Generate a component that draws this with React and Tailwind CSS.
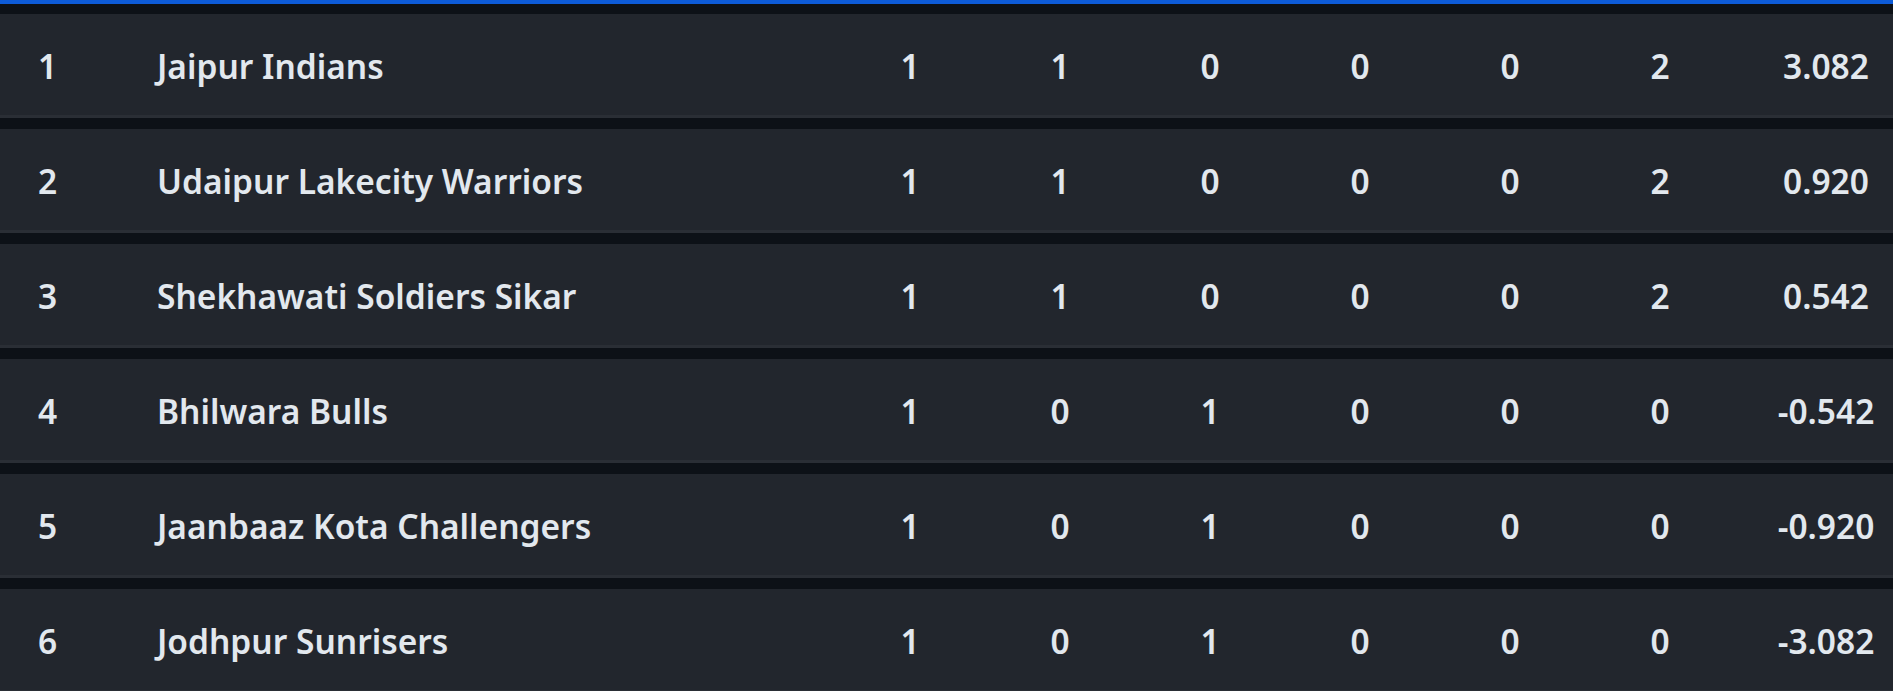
const rows = [
  ["1", "Jaipur Indians", "1", "1", "0", "0", "0", "2", "3.082"],
  ["2", "Udaipur Lakecity Warriors", "1", "1", "0", "0", "0", "2", "0.920"],
  ["3", "Shekhawati Soldiers Sikar", "1", "1", "0", "0", "0", "2", "0.542"],
  ["4", "Bhilwara Bulls", "1", "0", "1", "0", "0", "0", "-0.542"],
  ["5", "Jaanbaaz Kota Challengers", "1", "0", "1", "0", "0", "0", "-0.920"],
  ["6", "Jodhpur Sunrisers", "1", "0", "1", "0", "0", "0", "-3.082"],
];

export default function App() {
  return (
    <div
      className="w-[1893px] h-[691px] overflow-hidden bg-[#0d1117] border-t-4 border-[#0d5bd8] pt-[10px] flex flex-col gap-[11px] text-[#e2e8ee] font-semibold text-[33.5px] leading-none"
      style={{ fontFamily: '"Noto Sans", sans-serif' }}
    >
      {rows.map((r) => (
        <div
          key={r[0]}
          className="shrink-0 h-[104px] bg-[#22262d] border-b-[3px] border-[#2a2e35] flex items-center pt-[4px]"
        >
          <div className="w-[157px] pl-[38px]">{r[0]}</div>
          <div className="flex-1">{r[1]}</div>
          {r.slice(2, 8).map((v, i) => (
            <div key={i} className="w-[150px] text-center">
              {v}
            </div>
          ))}
          <div className="w-[158px] pl-[24px] text-center">{r[8]}</div>
        </div>
      ))}
    </div>
  );
}
